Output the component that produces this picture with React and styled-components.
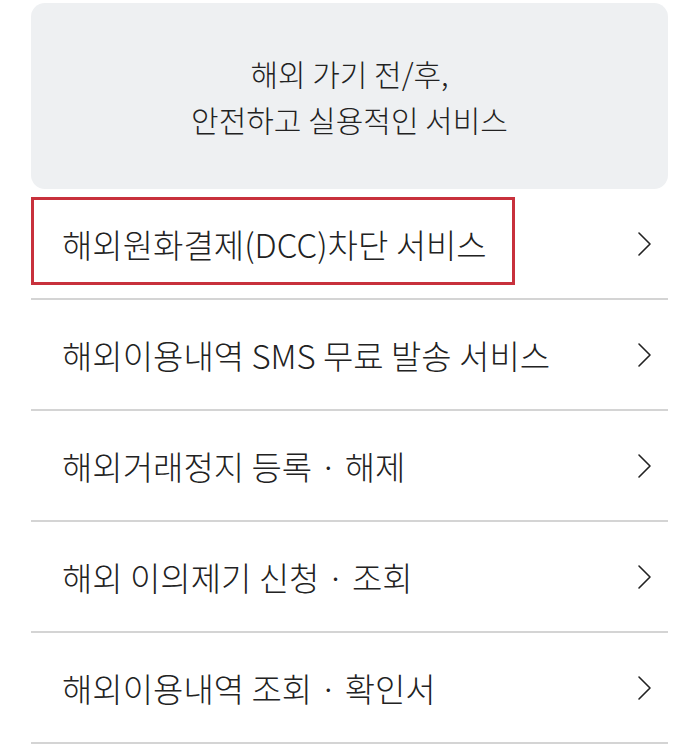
import styled, { createGlobalStyle } from 'styled-components';

const GlobalStyle = createGlobalStyle`
  html, body {
    margin: 0;
    padding: 0;
    background: #ffffff;
  }
  body {
    font-family: "Noto Sans CJK KR", "Noto Sans", sans-serif;
    color: #222222;
  }
`;

const items = [
  { label: '해외원화결제(DCC)차단 서비스', marked: true },
  { label: '해외이용내역 SMS 무료 발송 서비스' },
  { label: '해외거래정지 등록 · 해제' },
  { label: '해외 이의제기 신청 · 조회' },
  { label: '해외이용내역 조회 · 확인서' },
];

const Chevron = () => (
  <svg width="18" height="26" viewBox="0 0 18 26" fill="none">
    <path d="M3 2 L14 13 L3 24" stroke="#222" strokeWidth="1.6" strokeLinecap="round" strokeLinejoin="round" />
  </svg>
);

const App = () => {
  return (
    <>
      <GlobalStyle />
      <Page>
        <Banner>
          <p>
            해외 가기 전/후,
            <br />
            안전하고 실용적인 서비스
          </p>
        </Banner>
        <List>
          {items.map((item) => (
            <Row key={item.label}>
              {item.marked && <Marker />}
              <Label>{item.label}</Label>
              <Chevron />
            </Row>
          ))}
        </List>
      </Page>
    </>
  );
};

const Page = styled.div`
  padding: 3px 32px 0 31px;
`;

const Banner = styled.div`
  background: #eef0f2;
  border-radius: 14px;
  height: 186px;
  display: flex;
  align-items: center;
  justify-content: center;
  p {
    margin: 0;
    text-align: center;
    font-size: 30px;
    line-height: 46px;
    font-weight: 300;
    color: #222;
  }
`;

const List = styled.ul`
  list-style: none;
  margin: 0;
  padding: 0;
`;

const Row = styled.li`
  position: relative;
  height: 109px;
  border-bottom: 2px solid #d4d4d4;
  display: flex;
  align-items: center;
  justify-content: space-between;
  padding: 0 14px 0 31px;
`;

const Label = styled.span`
  font-size: 33px;
  font-weight: 300;
  color: #222;
`;

const Marker = styled.div`
  position: absolute;
  left: 0;
  top: 8px;
  width: 484px;
  height: 88px;
  box-sizing: border-box;
  border: 3px solid #c8313c;
  pointer-events: none;
`;

export default App;
